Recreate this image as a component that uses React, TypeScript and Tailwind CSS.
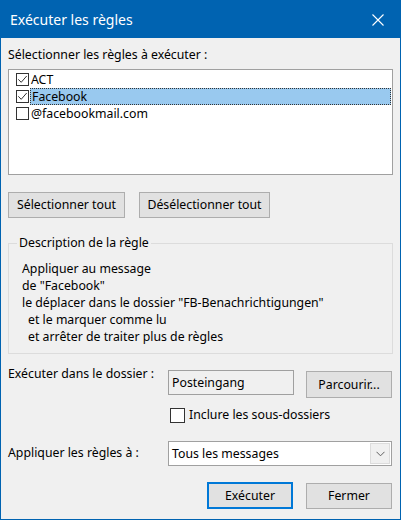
import React from "react";

const font = { fontFamily: '"Noto Sans", "Segoe UI", sans-serif' };

function Check({ checked }: { checked: boolean }) {
  return (
    <span className="flex h-[13px] w-[13px] shrink-0 items-center justify-center border border-[#333333] bg-white">
      {checked && (
        <svg width="11" height="11" viewBox="0 0 11 11">
          <path d="M1.3 5.3 L4.2 8.3 L9.7 2" fill="none" stroke="#333333" strokeWidth="1" />
        </svg>
      )}
    </span>
  );
}

function Btn({ label, className }: { label: string; className: string }) {
  return (
    <div
      className={
        "flex items-center justify-center border border-[#adadad] bg-[#e1e1e1] text-black " +
        className
      }
    >
      {label}
    </div>
  );
}

export default function App() {
  const rules = [
    { name: "ACT", checked: true, selected: false },
    { name: "Facebook", checked: true, selected: true },
    { name: "@facebookmail.com", checked: false, selected: false },
  ];

  return (
    <div
      style={font}
      className="flex h-[520px] w-[401px] flex-col border border-[#0063b1] bg-[#f0f0f0] text-[12.3px] leading-[16px] text-black"
    >
      {/* barre de titre */}
      <div className="flex h-[37px] shrink-0 items-center justify-between bg-[#0063b1] pl-[9px] pr-[16px]">
        <span className="text-[14px] text-white">Exécuter les règles</span>
        <svg width="12" height="12" viewBox="0 0 12 12">
          <path d="M0.5 0.5 L11.5 11.5 M11.5 0.5 L0.5 11.5" stroke="#ffffff" strokeWidth="1.1" />
        </svg>
      </div>

      <div className="flex flex-col px-[7px]">
        <div className="mt-[9px]">Sélectionner les règles à exécuter :</div>

        {/* liste des règles */}
        <div className="mt-[6px] h-[106px] border border-[#a0a0a0] bg-white pt-[1px]">
          {rules.map((r) => (
            <div key={r.name} className="flex h-[17px] items-center">
              <div className="flex w-[21px] justify-end pr-[1px]">
                <Check checked={r.checked} />
              </div>
              <div
                className={
                  "flex h-[17px] flex-1 items-center pl-[1px] mr-[1px] " +
                  (r.selected ? "border border-dotted border-[#333333] bg-[#99c9ef]" : "")
                }
              >
                {r.name}
              </div>
            </div>
          ))}
        </div>

        {/* boutons de sélection */}
        <div className="mt-[17px] flex gap-[14px]">
          <Btn label="Sélectionner tout" className="h-[26px] w-[117px]" />
          <Btn label="Désélectionner tout" className="h-[26px] w-[131px]" />
        </div>

        {/* description */}
        <div className="mt-[25px] h-[111px] border border-[#dcdcdc] pl-[13px]">
          <div className="-mt-[9px] w-fit bg-[#f0f0f0] px-[2px] -ml-[5px]">Description de la règle</div>
          <div className="mt-[9px] flex flex-col leading-[17px]">
            <span>Appliquer au message</span>
            <span>de "Facebook"</span>
            <span>le déplacer dans le dossier "FB-Benachrichtigungen"</span>
            <span className="pl-[6px]">et le marquer comme lu</span>
            <span className="pl-[6px]">et arrêter de traiter plus de règles</span>
          </div>
        </div>

        {/* dossier */}
        <div className="mt-[16px] flex items-start">
          <span className="mt-[-4px] w-[160px]">Exécuter dans le dossier :</span>
          <div className="flex h-[25px] w-[126px] items-center border border-[#a0a0a0] pl-[3px]">
            Posteingang
          </div>
          <Btn label="Parcourir..." className="ml-[12px] mt-[1px] h-[27px] w-[86px] items-end pb-[4px]" />
        </div>
        <div className="mt-[9px] flex items-center pl-[162px]">
          <span className="flex h-[15px] w-[15px] border border-[#333333] bg-white" />
          <span className="ml-[4px]">Inclure les sous-dossiers</span>
        </div>

        {/* appliquer à */}
        <div className="mt-[18px] flex items-center">
          <span className="mt-[-2px] w-[160px]">Appliquer les règles à :</span>
          <div className="flex h-[25px] w-[224px] items-center border border-[#a0a0a0] bg-white pl-[3px]">
            <span className="flex-1">Tous les messages</span>
            <div className="mr-[1px] flex h-[21px] w-[20px] items-center justify-center border border-[#dcdcdc] bg-[#f0f0f0]">
              <svg width="9" height="6" viewBox="0 0 9 6">
                <path d="M0.5 0.8 L4.5 4.8 L8.5 0.8" fill="none" stroke="#606060" strokeWidth="1" />
              </svg>
            </div>
          </div>
        </div>

        {/* boutons finaux */}
        <div className="mt-[16px] flex justify-end gap-[13px] pr-[1px]">
          <div className="flex h-[27px] w-[86px] items-center justify-center border-2 border-[#0078d7] bg-[#e1e1e1]">
            Exécuter
          </div>
          <Btn label="Fermer" className="mt-[1px] h-[26px] w-[86px]" />
        </div>
      </div>
    </div>
  );
}
